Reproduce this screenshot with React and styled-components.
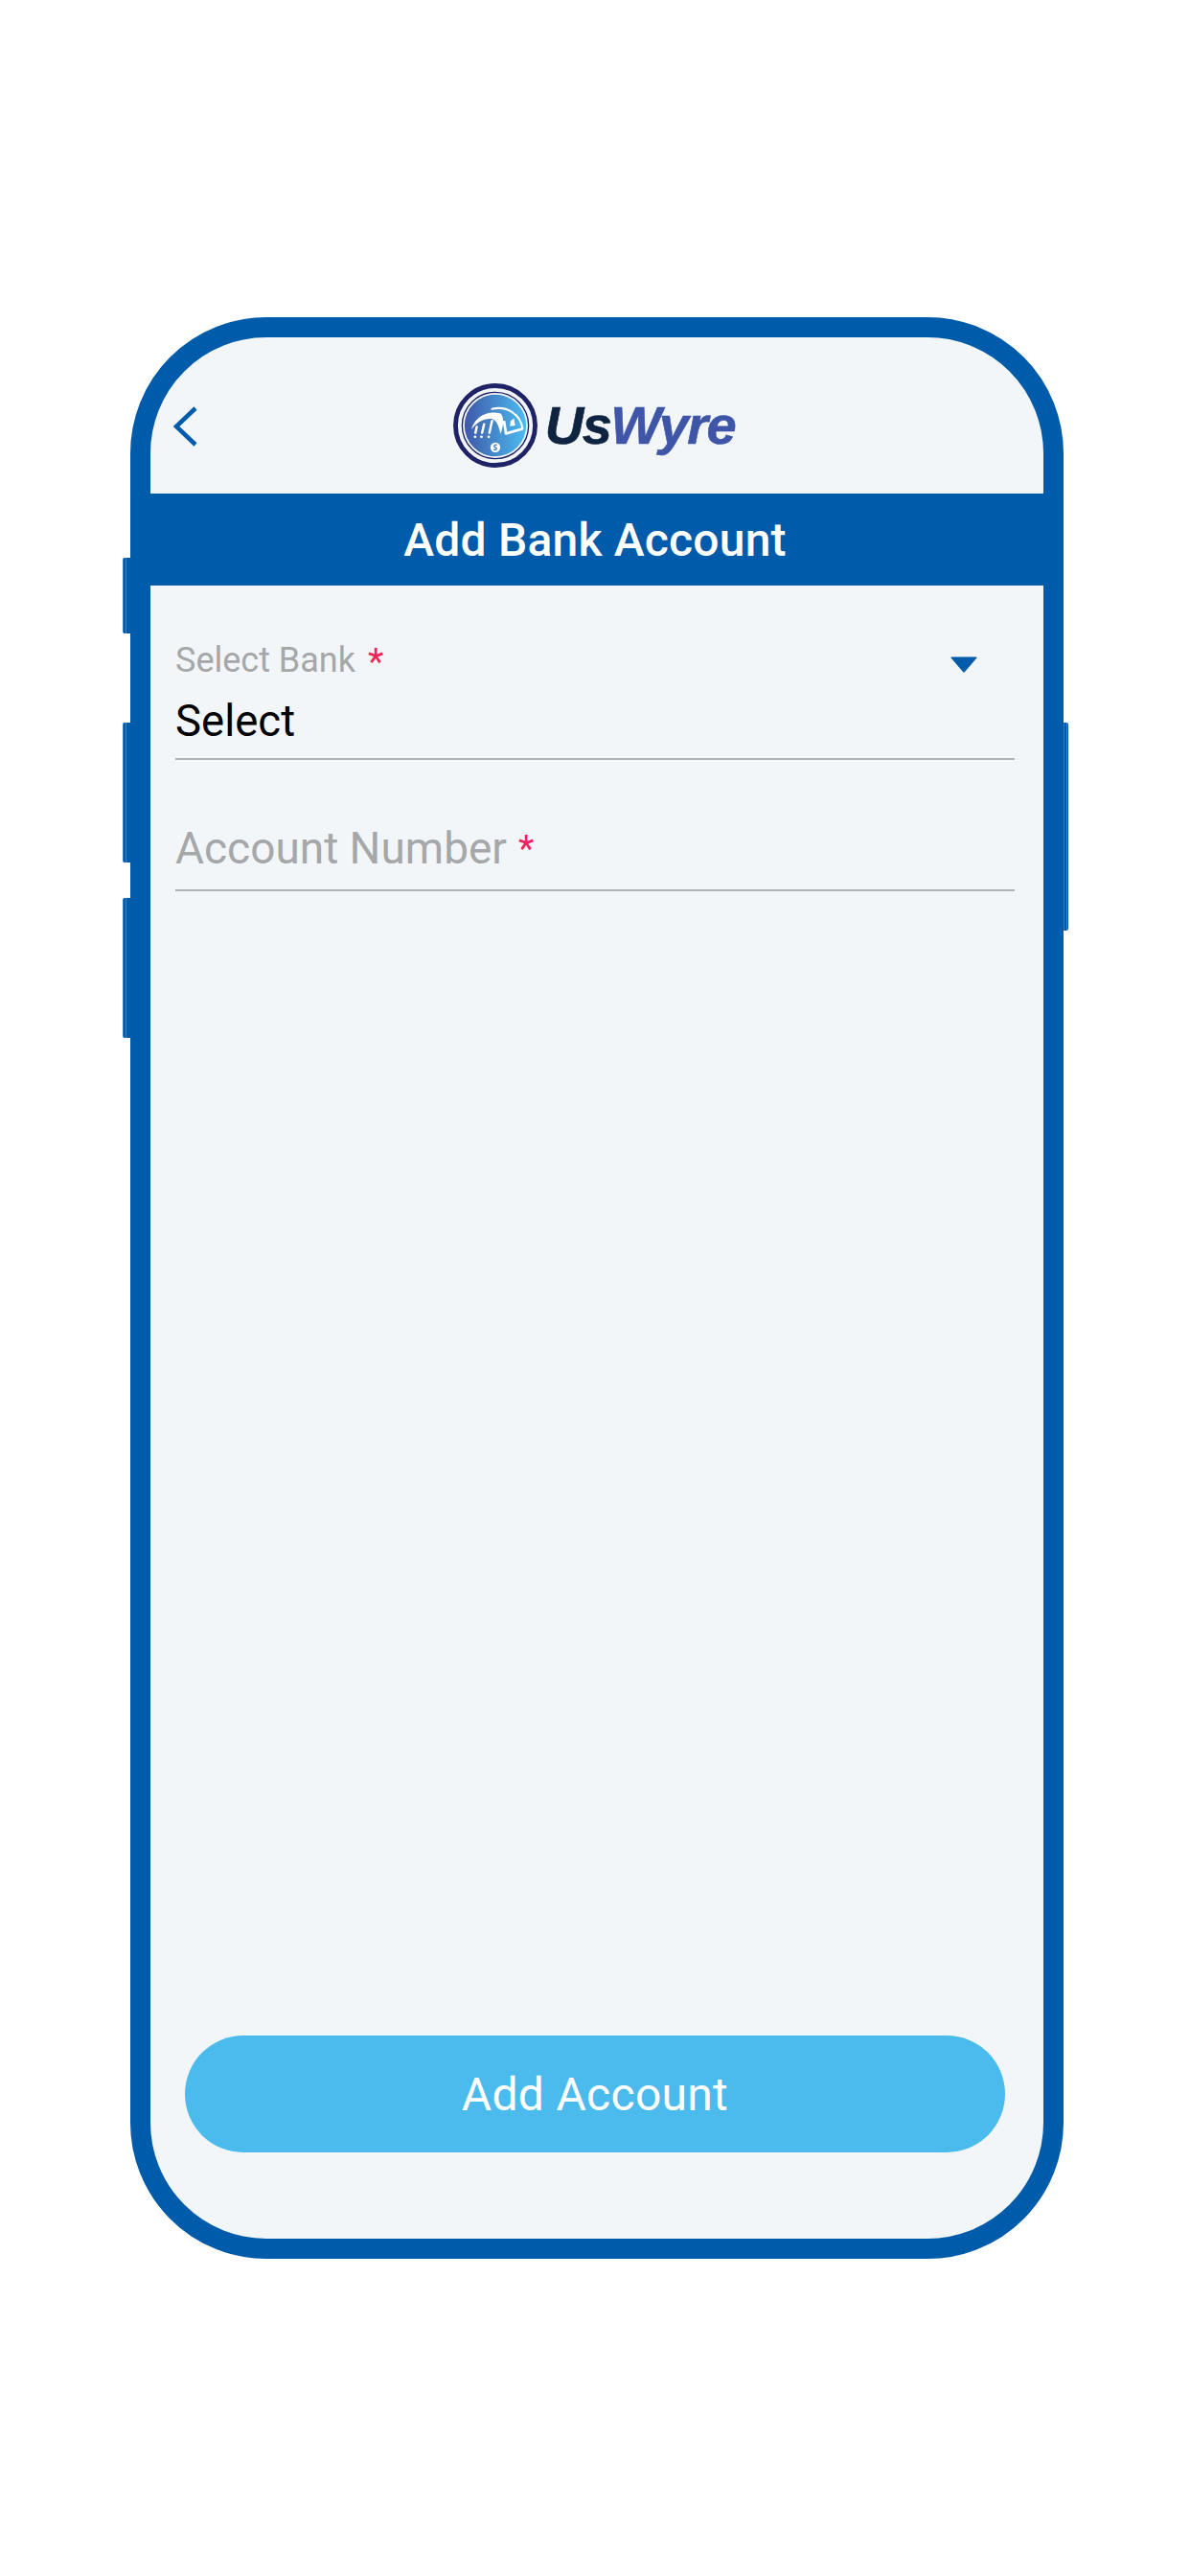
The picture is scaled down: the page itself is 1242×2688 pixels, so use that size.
import styled, { createGlobalStyle } from 'styled-components'

const GlobalStyle = createGlobalStyle`
  html, body {
    margin: 0;
    padding: 0;
    background: #ffffff;
    font-family: Roboto, 'Liberation Sans', sans-serif;
  }
  * {
    box-sizing: border-box;
  }
`

const Page = styled.div`
  width: 1242px;
  height: 2688px;
  padding: 331px 132px 0 136px;
`

const Phone = styled.div`
  position: relative;
  width: 974px;
  height: 2026px;
  border: 21px solid #005baa;
  border-radius: 142px;
  background: #f2f6f9;
`

const SideKey = styled.span`
  position: absolute;
  top: ${(p) => p.$top}px;
  height: ${(p) => p.$height}px;
  ${(p) => (p.$right ? 'right: -26px; width: 5px; border-radius: 0 2px 2px 0;' : 'left: -29px; width: 8px; border-radius: 2px 0 0 2px;')}
  background: linear-gradient(90deg, #2f7abb 0 1px, #005baa 1px 3px, #3a82c0 3px 4px, #005baa 4px);
`

const Screen = styled.div`
  display: flex;
  flex-direction: column;
  height: 100%;
`

const Header = styled.header`
  position: relative;
  display: flex;
  align-items: center;
  justify-content: center;
  height: 163px;
  padding-right: 7px;
`

const BackButton = styled.button`
  position: absolute;
  left: 22px;
  top: 71px;
  display: flex;
  width: 30px;
  height: 44px;
  padding: 0;
  border: 0;
  background: none;
`

const Logo = styled.div`
  display: flex;
  align-items: center;
  gap: 7px;
  margin-top: 21px;
`

const LogoMark = styled.svg`
  width: 90px;
  height: 90px;
`

const LogoText = styled.span`
  font-family: 'Liberation Sans', Arial, sans-serif;
  font-size: 56px;
  font-style: italic;
  font-weight: 700;
  line-height: 1;
  letter-spacing: -1.5px;
  -webkit-text-stroke: 0.6px currentColor;
  color: #0f2440;
`

const LogoAccent = styled.span`
  color: #3f55a8;
`

const TitleBar = styled.div`
  display: flex;
  align-items: center;
  justify-content: center;
  height: 96px;
  margin: 0 -21px;
  padding-right: 4px;
  background: #005baa;
  color: #ffffff;
  font-size: 48px;
  font-weight: 500;
  letter-spacing: 0.2px;
`

const Form = styled.form`
  display: flex;
  flex-direction: column;
  flex: 1;
  padding: 0 30px 90px 26px;
`

const SelectField = styled.div`
  position: relative;
  display: flex;
  flex-direction: column;
  height: 182px;
  padding-top: 57px;
  border-bottom: 2px solid #b0b2b5;
`

const SmallLabel = styled.label`
  font-size: 36px;
  line-height: 42px;
  color: #a6a7a8;
`

const Star = styled.span`
  margin-left: ${(p) => p.$gap}px;
  font-size: 38px;
  line-height: 1;
  vertical-align: ${(p) => p.$drop}px;
  color: #f0245a;
`

const SelectValue = styled.div`
  margin-top: 17px;
  font-size: 45.5px;
  line-height: 52px;
  color: #000000;
`

const Caret = styled.svg`
  position: absolute;
  right: 39px;
  top: 74px;
  width: 28px;
  height: 17px;
`

const InputField = styled.div`
  display: flex;
  align-items: flex-end;
  height: 137px;
  padding-bottom: 15px;
  border-bottom: 2px solid #b0b2b5;
`

const Placeholder = styled.span`
  font-size: 46px;
  line-height: 56px;
  color: #a6a7a8;
`

const SubmitButton = styled.button`
  width: 856px;
  height: 122px;
  margin: auto 0 0 10px;
  padding: 0;
  border: 0;
  border-radius: 61px;
  background: #4bbbee;
  color: #ffffff;
  font-family: Roboto, sans-serif;
  font-size: 48px;
  font-weight: 400;
  letter-spacing: 0.3px;
`

function UsWyreMark() {
  return (
    <LogoMark viewBox="30 30 260 260">
      <defs>
        <linearGradient id="disc" x1="0" x2="1" y1="0.2" y2="0.2">
          <stop offset="0" stopColor="#3f58a9" />
          <stop offset="1" stopColor="#4bbcef" />
        </linearGradient>
      </defs>
      <circle cx="160" cy="160" r="120" fill="none" stroke="#1f2266" strokeWidth="14" />
      <circle cx="160" cy="160" r="100" fill="none" stroke="#1f2266" strokeWidth="4" />
      <circle cx="160" cy="160" r="93" fill="url(#disc)" />
      <path d="M88 172 C96 138 132 112 176 124 C188 136 184 160 176 186 C170 160 164 146 150 140 C128 138 104 150 88 172 Z" fill="#ffffff" />
      <path d="M150 110 C196 100 236 126 242 170" fill="none" stroke="#ffffff" strokeWidth="6" strokeLinecap="round" />
      <path d="M186 146 L192 184 L242 170" fill="none" stroke="#ffffff" strokeWidth="8" strokeLinejoin="round" />
      <path d="M206 146 L216 138 L220 160 L204 162 Z" fill="#ffffff" />
      <path d="M104 164 L100 182 M126 156 L120 182 M150 146 L142 182" stroke="#ffffff" strokeWidth="7" strokeLinecap="round" />
      <circle cx="99" cy="194" r="4" fill="#ffffff" />
      <circle cx="118" cy="194" r="4" fill="#ffffff" />
      <circle cx="140" cy="194" r="4" fill="#ffffff" />
      <circle cx="160" cy="226" r="15" fill="#ffffff" />
      <path d="M165 219 C157 216 153 224 160 226 C167 228 163 236 155 232" fill="none" stroke="#3f7cc4" strokeWidth="4" />
    </LogoMark>
  )
}

export default function App() {
  return (
    <>
      <GlobalStyle />
      <Page>
        <Phone>
          <SideKey $top={230} $height={79} />
          <SideKey $top={402} $height={146} />
          <SideKey $top={585} $height={146} />
          <SideKey $right $top={402} $height={217} />
          <Screen>
            <Header>
              <BackButton type="button" aria-label="Back">
                <svg width="30" height="44" viewBox="0 0 30 44" fill="none">
                  <path d="M25 3 L5 22 L25 41" stroke="#005baa" strokeWidth="4.5" />
                </svg>
              </BackButton>
              <Logo>
                <UsWyreMark />
                <LogoText>
                  Us<LogoAccent>Wyre</LogoAccent>
                </LogoText>
              </Logo>
            </Header>
            <TitleBar>Add Bank Account</TitleBar>
            <Form>
              <SelectField>
                <SmallLabel>
                  Select Bank<Star $gap={13} $drop={-3}>*</Star>
                </SmallLabel>
                <SelectValue>Select</SelectValue>
                <Caret viewBox="0 0 28 17">
                  <path d="M1 0.5 H27 Q28 1 27 2 L15 16 Q14 17 13 16 L1 2 Q0 1 1 0.5 Z" fill="#005baa" />
                </Caret>
              </SelectField>
              <InputField>
                <Placeholder>
                  Account Number<Star $gap={12} $drop={2}>*</Star>
                </Placeholder>
              </InputField>
              <SubmitButton type="button">Add Account</SubmitButton>
            </Form>
          </Screen>
        </Phone>
      </Page>
    </>
  )
}
